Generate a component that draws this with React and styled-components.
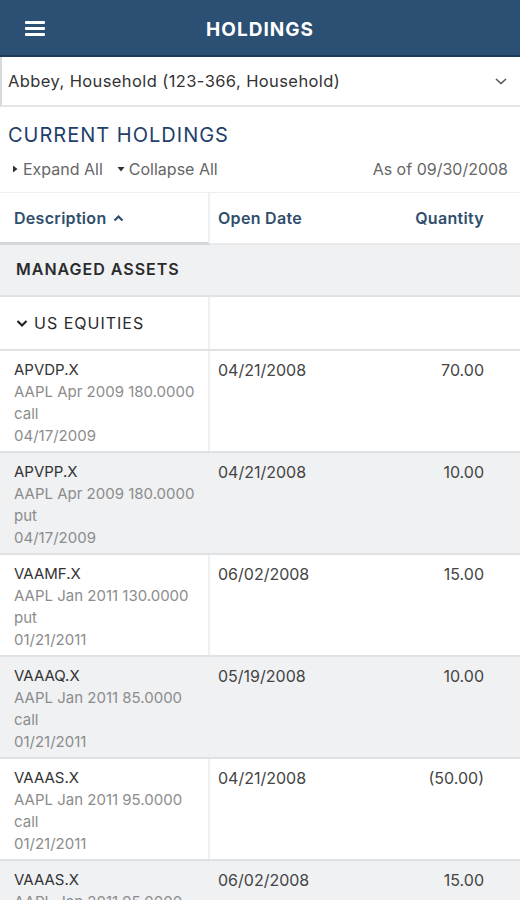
import React from "react";
import styled, { createGlobalStyle } from "styled-components";

const Global = createGlobalStyle`
  html, body { margin: 0; padding: 0; background: #fff; }
  body { font-family: Inter, "Liberation Sans", Arial, sans-serif; -webkit-font-smoothing: antialiased; }
`;

const Page = styled.div`
  width: 520px;
  height: 900px;
  overflow: hidden;
  background: #fff;
`;

const TopBar = styled.header`
  height: 55px;
  background: #2c5073;
  border-bottom: 2px solid #1f3b57;
  display: flex;
  align-items: center;
  justify-content: center;
  position: relative;
`;

const MenuButton = styled.button`
  position: absolute;
  left: 25px;
  top: 19px;
  width: 20px;
  height: 19px;
  border: none;
  background: none;
  display: flex;
  flex-direction: column;
  justify-content: space-between;
  padding: 2px 0;
  & > span {
    display: block;
    height: 3px;
    border-radius: 1px;
    background: #fff;
  }
`;

const Title = styled.h1`
  margin: 3px 0 0;
  color: #fff;
  font-size: 19px;
  font-weight: 700;
  letter-spacing: 1px;
`;

const Selector = styled.div`
  height: 48px;
  display: flex;
  align-items: center;
  justify-content: space-between;
  padding: 0 12px 0 6px;
  border-left: 2px solid #d7dadd;
  border-bottom: 2px solid #e4e6e8;
  font-size: 16.5px;
  letter-spacing: 0.4px;
  color: #333;
`;

const SectionTitle = styled.h2`
  margin: 0;
  padding: 16px 8px 0;
  font-size: 20px;
  font-weight: 400;
  color: #1f3f6b;
  line-height: 24px;
  letter-spacing: 1px;
`;

const Controls = styled.div`
  display: flex;
  align-items: center;
  justify-content: space-between;
  padding: 11px 12px 0 11px;
  height: 22px;
  font-size: 16px;
  color: #666;
`;

const ControlGroup = styled.div`
  display: flex;
  align-items: center;
  gap: 14px;
`;

const Toggle = styled.span`
  display: inline-flex;
  align-items: center;
  gap: 4px;
`;

const Table = styled.div`
  margin-top: 12px;
  border-top: 1px solid #eceef0;
`;

const Row = styled.div`
  display: grid;
  grid-template-columns: 210px 1fr 150px;
  height: ${(p) => p.$h}px;
  background: ${(p) => (p.$shade ? "#eff1f3" : "#fff")};
  border-bottom: 2px solid #dfe2e5;
  box-sizing: border-box;
`;

const HeadRow = styled(Row)`
  border-bottom: none;
`;

const Cell = styled.div`
  padding: ${(p) => p.$pad || "10px 0 0 14px"};
  border-right: ${(p) => (p.$divider ? "2px solid #eef0f2" : "none")};
  text-align: ${(p) => (p.$right ? "right" : "left")};
  box-sizing: border-box;
  ${(p) => p.$underline && "border-bottom: 3px solid #d4d7da;"}
  ${(p) => p.$underlineLight && "border-bottom: 2px solid #e8eaec;"}
`;

const HeadLabel = styled.span`
  display: inline-flex;
  align-items: center;
  gap: 7px;
  font-size: 16px;
  font-weight: 600;
  letter-spacing: 0.3px;
  color: #2f4e6c;
  line-height: 48px;
`;

const GroupLabel = styled.span`
  display: inline-flex;
  align-items: center;
  gap: 6px;
  font-size: 16px;
  font-weight: ${(p) => (p.$bold ? 600 : 400)};
  letter-spacing: 1px;
  color: #2b2b2b;
  line-height: 52px;
`;

const Symbol = styled.div`
  font-size: 15px;
  color: #333;
  line-height: 22px;
`;

const Detail = styled.div`
  font-size: 15px;
  color: #8c8c8c;
  line-height: 22px;
`;

const Value = styled.div`
  font-size: 16px;
  color: #444;
  line-height: 22px;
`;

const rows = [
  { sym: "APVDP.X", d: ["AAPL Apr 2009 180.0000", "call", "04/17/2009"], date: "04/21/2008", qty: "70.00" },
  { sym: "APVPP.X", d: ["AAPL Apr 2009 180.0000", "put", "04/17/2009"], date: "04/21/2008", qty: "10.00" },
  { sym: "VAAMF.X", d: ["AAPL Jan 2011 130.0000", "put", "01/21/2011"], date: "06/02/2008", qty: "15.00" },
  { sym: "VAAAQ.X", d: ["AAPL Jan 2011 85.0000", "call", "01/21/2011"], date: "05/19/2008", qty: "10.00" },
  { sym: "VAAAS.X", d: ["AAPL Jan 2011 95.0000", "call", "01/21/2011"], date: "04/21/2008", qty: "(50.00)" },
  { sym: "VAAAS.X", d: ["AAPL Jan 2011 95.0000", "call", "01/21/2011"], date: "06/02/2008", qty: "15.00" },
];

const Caret = ({ dir }) => (
  <svg width="8" height="10" viewBox="0 0 8 10">
    {dir === "right" ? <path d="M2 1.5 L6.5 5 L2 8.5 Z" fill="#333" /> : <path d="M0.5 3 L7.5 3 L4 7.5 Z" fill="#333" />}
  </svg>
);

export default function App() {
  return (
    <Page>
      <Global />
      <TopBar>
        <MenuButton aria-label="menu">
          <span />
          <span />
          <span />
        </MenuButton>
        <Title>HOLDINGS</Title>
      </TopBar>
      <Selector>
        <span>Abbey, Household (123-366, Household)</span>
        <svg width="14" height="10" viewBox="0 0 14 10">
          <path d="M2 3 L7 7.5 L12 3" fill="none" stroke="#555" strokeWidth="1.6" />
        </svg>
      </Selector>
      <SectionTitle>CURRENT HOLDINGS</SectionTitle>
      <Controls>
        <ControlGroup>
          <Toggle>
            <Caret dir="right" />
            Expand All
          </Toggle>
          <Toggle>
            <Caret dir="down" />
            Collapse All
          </Toggle>
        </ControlGroup>
        <span>As of 09/30/2008</span>
      </Controls>
      <Table>
        <HeadRow $h={50}>
          <Cell $pad="1px 0 0 14px" $divider $underline>
            <HeadLabel>
              Description
              <svg width="11" height="8" viewBox="0 0 11 8">
                <path d="M1.5 6.5 L5.5 2.5 L9.5 6.5" fill="none" stroke="#2f4e6c" strokeWidth="2.2" />
              </svg>
            </HeadLabel>
          </Cell>
          <Cell $pad="1px 0 0 8px" $underlineLight>
            <HeadLabel>Open Date</HeadLabel>
          </Cell>
          <Cell $pad="1px 36px 0 0" $right $underlineLight>
            <HeadLabel>Quantity</HeadLabel>
          </Cell>
        </HeadRow>
        <Row $h={54} $shade>
          <Cell $pad="0 0 0 16px">
            <GroupLabel $bold>MANAGED ASSETS</GroupLabel>
          </Cell>
          <Cell />
          <Cell />
        </Row>
        <Row $h={54}>
          <Cell $pad="0 0 0 16px" $divider>
            <GroupLabel>
              <svg width="12" height="9" viewBox="0 0 12 9">
                <path d="M1.5 2 L6 6.5 L10.5 2" fill="none" stroke="#222" strokeWidth="2.2" />
              </svg>
              US EQUITIES
            </GroupLabel>
          </Cell>
          <Cell />
          <Cell />
        </Row>
        {rows.map((r, i) => (
          <Row key={i} $h={102} $shade={i % 2 === 1}>
            <Cell $pad="8px 0 0 14px" $divider>
              <Symbol>{r.sym}</Symbol>
              {r.d.map((t, j) => (
                <Detail key={j}>{t}</Detail>
              ))}
            </Cell>
            <Cell $pad="8px 0 0 8px">
              <Value>{r.date}</Value>
            </Cell>
            <Cell $pad="8px 36px 0 0" $right>
              <Value>{r.qty}</Value>
            </Cell>
          </Row>
        ))}
      </Table>
    </Page>
  );
}
